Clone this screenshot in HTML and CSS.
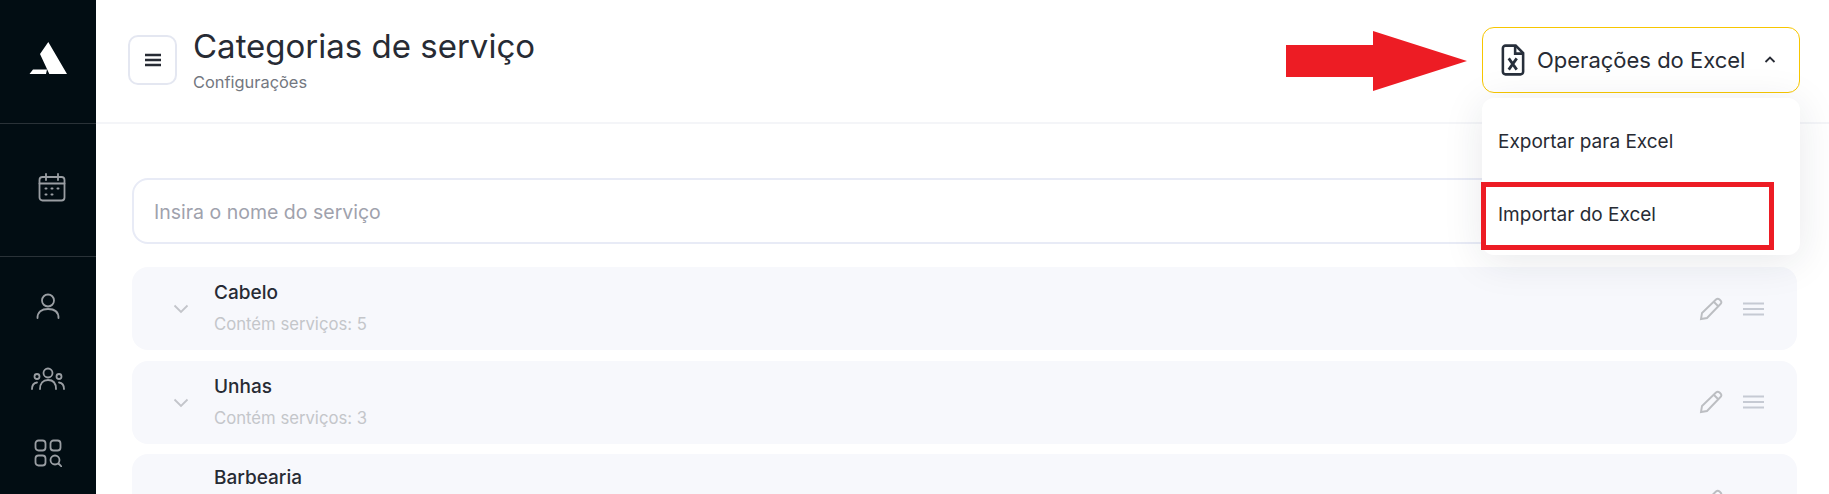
FILE: index.html
```html
<!DOCTYPE html>
<html lang="pt">
<head>
  <meta charset="UTF-8" />
  <title>Categorias de serviço</title>
  <link rel="stylesheet" href="styles.css">
</head>
<body>
  <div class="app">
    <aside class="sidebar">
      <div class="side-block side-logo">
        <svg width="38" height="32" viewBox="0 0 38 32"><path class="logo" d="M19.300 0L11 12l9.300 20H38ZM0.500 32L4 27.500H18L17 32Z"/></svg>
      </div>
      <div class="side-block side-cal">
        <svg class="side-icon" width="28" height="29" viewBox="0 0 28 29"><rect x="1.500" y="4" width="25" height="23.500" rx="3"/><path d="M1.500 10.500H26.500M8 1v6M20 1v6"/><path class="dots" d="M7.500 15.500h1M13.500 15.500h1M19.500 15.500h1M7.500 21.500h1M13.500 21.500h1"/></svg>
      </div>
      <nav class="side-nav">
        <svg class="side-icon" width="24" height="26" viewBox="0 0 24 26"><circle cx="12" cy="7.500" r="6"/><path d="M1.500 25c0-6 4-9 10.500-9s10.500 3 10.500 9"/></svg>
        <svg class="side-icon" width="34" height="24" viewBox="0 0 34 24"><circle cx="17" cy="6" r="4.500"/><circle cx="6" cy="9.500" r="2.500"/><circle cx="28" cy="9.500" r="2.500"/><path d="M9 22c0-6 3-9 8-9s8 3 8 9M1 22c0-4 1.500-6 5-6.500M33 22c0-4-1.500-6-5-6.500"/></svg>
        <svg class="side-icon" width="28" height="28" viewBox="0 0 28 28"><rect x="1.500" y="1.500" width="10" height="10" rx="3"/><rect x="16.500" y="1.500" width="10" height="10" rx="3"/><rect x="1.500" y="16.500" width="10" height="10" rx="3"/><circle cx="21" cy="21" r="4.500"/><path d="M24.500 24.500l3 3"/></svg>
      </nav>
    </aside>

    <main class="main">
      <header class="topbar">
        <button class="menu-btn">
          <svg width="18" height="14" viewBox="0 0 18 14"><path d="M1 2h16M1 7h16M1 12h16"/></svg>
        </button>
        <div class="titles">
          <h1>Categorias de serviço</h1>
          <p>Configurações</p>
        </div>
        <button class="excel-btn">
          <svg class="excel-icon" width="24" height="32" viewBox="0 0 22 30"><path d="M13.500 1.500H4a2.500 2.500 0 0 0-2.500 2.500v22A2.500 2.500 0 0 0 4 28.500h14a2.500 2.500 0 0 0 2.500-2.500V8.500z"/><path d="M13 1.500v7.500h7.500"/><path class="excel-x" d="M7 13.500l7.500 10.500M14.500 13.500L7 24"/></svg>
          <span>Operações do Excel</span>
          <svg class="caret" width="12" height="8" viewBox="0 0 12 8"><path d="M1.500 6L6 1.500 10.500 6"/></svg>
        </button>
      </header>

      <section class="content">
        <div class="search">Insira o nome do serviço</div>

        <div class="row">
          <svg class="chev" width="16" height="10" viewBox="0 0 16 10"><path d="M1.500 1.500L8 8l6.500-6.500"/></svg>
          <div class="row-text"><strong>Cabelo</strong><span>Contém serviços: 5</span></div>
          <svg class="pencil" width="24" height="24" viewBox="0 0 24 24"><path d="M2 22l1-6L17 2.500a2.500 2.500 0 0 1 3.500 0l1 1a2.500 2.500 0 0 1 0 3.500L8 21z"/><path d="M15 5l4.500 4.500"/></svg>
          <svg class="lines" width="22" height="14" viewBox="0 0 22 14"><path d="M0 1.500h21M0 7h21M0 12.500h21"/></svg>
        </div>
        <div class="row">
          <svg class="chev" width="16" height="10" viewBox="0 0 16 10"><path d="M1.500 1.500L8 8l6.500-6.500"/></svg>
          <div class="row-text"><strong>Unhas</strong><span>Contém serviços: 3</span></div>
          <svg class="pencil" width="24" height="24" viewBox="0 0 24 24"><path d="M2 22l1-6L17 2.500a2.500 2.500 0 0 1 3.500 0l1 1a2.500 2.500 0 0 1 0 3.500L8 21z"/><path d="M15 5l4.500 4.500"/></svg>
          <svg class="lines" width="22" height="14" viewBox="0 0 22 14"><path d="M0 1.500h21M0 7h21M0 12.500h21"/></svg>
        </div>
        <div class="row row-cut">
          <svg class="chev" width="16" height="10" viewBox="0 0 16 10"><path d="M1.500 1.500L8 8l6.500-6.500"/></svg>
          <div class="row-text"><strong>Barbearia</strong></div>
          <svg class="pencil" width="24" height="24" viewBox="0 0 24 24"><path d="M2 22l1-6L17 2.500a2.500 2.500 0 0 1 3.500 0l1 1a2.500 2.500 0 0 1 0 3.500L8 21z"/><path d="M15 5l4.500 4.500"/></svg>
          <svg class="lines" width="22" height="14" viewBox="0 0 22 14"><path d="M0 1.500h21M0 7h21M0 12.500h21"/></svg>
        </div>
      </section>
    </main>

    <div class="dropdown">
      <div class="dropdown-item">Exportar para Excel</div>
      <div class="dropdown-item">Importar do Excel</div>
    </div>

    <svg class="mark-arrow" width="183" height="62" viewBox="0 0 183 62"><path d="M1 15H88V1L182 31 88 61V47H1Z"/></svg>
    <div class="mark-box"></div>
  </div>
</body>
</html>
```

FILE: styles.css
```css
* {
  box-sizing: border-box;
}

html, body {
  margin: 0;
  height: 100%;
  overflow: hidden;
}

body {
  font-family: Inter, "Noto Sans", sans-serif;
  background-color: #ffffff;
  color: #272b34;
}

.app {
  position: relative;
  display: flex;
  height: 494px;
  overflow: hidden;
}

/* sidebar */
.sidebar {
  flex: 0 0 96px;
  background-color: #020d13;
  display: flex;
  flex-direction: column;
}

.side-block {
  display: flex;
  justify-content: center;
  align-items: center;
  border-bottom: 1px solid #2a3238;
}

.side-logo {
  height: 124px;
  padding-bottom: 8px;
}

.logo {
  fill: #ffffff;
}

.side-cal {
  height: 133px;
  padding-left: 7px;
  padding-bottom: 5px;
}

.side-icon {
  fill: none;
  stroke: #9a9ea3;
  stroke-width: 1.8;
  stroke-linecap: round;
}

.side-icon .dots {
  stroke-width: 2;
}

.side-nav {
  display: flex;
  flex-direction: column;
  align-items: center;
  gap: 48px;
  padding-top: 36px;
  padding-right: 1px;
}

/* top bar */
.main {
  flex: 1;
  min-width: 0;
}

.topbar {
  height: 124px;
  display: flex;
  align-items: flex-start;
  padding: 27px 29px 0 32px;
  border-bottom: 2px solid #f4f5f8;
}

.menu-btn {
  width: 49px;
  height: 50px;
  margin-top: 8px;
  border: 2px solid #e4e7f1;
  border-radius: 10px;
  background-color: #ffffff;
  display: flex;
  justify-content: center;
  align-items: center;
  padding: 0;
}

.menu-btn svg {
  fill: none;
  stroke: #272b34;
  stroke-width: 2.4;
}

.titles {
  margin-left: 16px;
  flex: 1;
}

.titles h1 {
  margin: 0;
  font-size: 33px;
  font-weight: 400;
  line-height: 40px;
  margin-top: -1px;
}

.titles p {
  margin: 6px 0 0;
  font-size: 16.400px;
  line-height: 20px;
  color: #73777f;
}

.excel-btn {
  width: 318px;
  height: 66px;
  border: 1px solid #f7c600;
  border-radius: 12px;
  background-color: #ffffff;
  display: flex;
  align-items: center;
  padding: 0 0 0 18px;
  font-family: inherit;
  font-size: 22px;
  color: #272b34;
}

.excel-icon {
  fill: none;
  stroke: #272f3b;
  stroke-width: 2.4;
}

.excel-icon .excel-x {
  stroke-width: 2.6;
}

.excel-btn span {
  margin-left: 12px;
}

.caret {
  margin-left: 19px;
  fill: none;
  stroke: #272b34;
  stroke-width: 1.8;
}

/* list */
.content {
  padding: 54px 32px 0 36px;
}

.search {
  height: 66px;
  border: 2px solid #e8ebf6;
  border-radius: 16px;
  padding: 2px 0 0 20px;
  display: flex;
  align-items: center;
  font-size: 19.500px;
  color: #9fa2ad;
  margin-bottom: 23px;
}

.row {
  height: 83px;
  background-color: #f7f8fc;
  border-radius: 16px;
  display: flex;
  align-items: center;
  padding: 0 32px 0 41px;
  margin-bottom: 10.500px;
}

.chev {
  fill: none;
  stroke: #c3c5ca;
  stroke-width: 1.8;
  margin-top: 1px;
}

.row-text {
  flex: 1;
  margin-left: 25px;
  display: flex;
  flex-direction: column;
  gap: 10px;
  margin-top: -1px;
}

.row-text strong {
  font-size: 19px;
  font-weight: 500;
  line-height: 22px;
}

.row-text span {
  font-size: 16.700px;
  line-height: 20px;
  color: #c4c6ca;
}

.row-cut {
  align-items: flex-start;
  padding-top: 13px;
}

.row-cut .row-text {
  margin-top: 0;
}

.row-cut .chev {
  margin-top: 31px;
}

.row-cut .pencil {
  margin-top: 22px;
}

.row-cut .lines {
  margin-top: 27px;
}

.pencil {
  fill: none;
  stroke: #bcbec2;
  stroke-width: 1.9;
  margin-right: 20px;
}

.lines {
  fill: none;
  stroke: #c6cad3;
  stroke-width: 1.8;
}

/* open menu and annotations */
.dropdown {
  position: absolute;
  left: 1482px;
  top: 98px;
  width: 318px;
  height: 157px;
  background-color: #ffffff;
  border-radius: 12px;
  box-shadow: 0 6px 40px rgba(30, 35, 60, 0.1);
  padding-top: 7px;
}

.dropdown-item {
  height: 73px;
  padding-left: 16px;
  display: flex;
  align-items: center;
  font-size: 19px;
}

.mark-arrow {
  position: absolute;
  left: 1285px;
  top: 30px;
  fill: #ed1c24;
}

.mark-box {
  position: absolute;
  left: 1481px;
  top: 182px;
  width: 293px;
  height: 68px;
  border: 5px solid #ed1c24;
}
```
